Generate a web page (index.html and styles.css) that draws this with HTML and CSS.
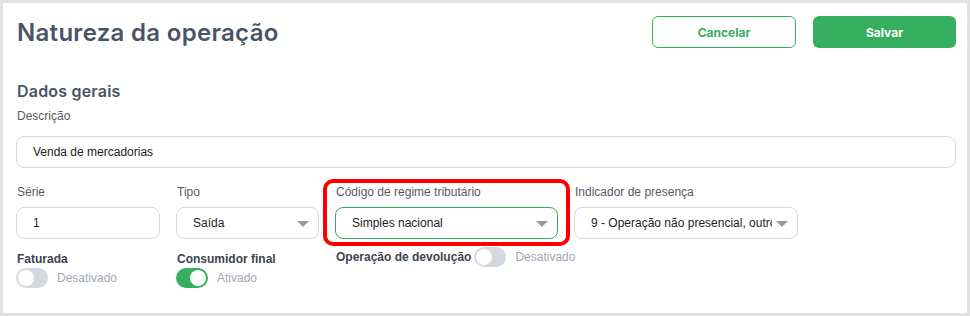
FILE: index.html
```html
<!DOCTYPE html>
<html lang="pt-BR">
<head>
    <meta charset="UTF-8">
    <meta name="viewport" content="width=device-width, initial-scale=1.0">
    <title>Natureza da operação</title>
    <link rel="stylesheet" href="styles.css">
</head>
<body>
    <div class="frame">
        <header class="page-header">
            <h1>Natureza da operação</h1>
            <div class="actions">
                <button class="btn btn-outline">Cancelar</button>
                <button class="btn btn-primary">Salvar</button>
            </div>
        </header>

        <section class="section">
            <h2>Dados gerais</h2>
            <label class="label">Descrição</label>
            <div class="input">Venda de mercadorias</div>

            <div class="grid">
                <div class="field">
                    <label class="label">Série</label>
                    <div class="input">1</div>
                </div>
                <div class="field">
                    <label class="label">Tipo</label>
                    <div class="input select">Saída</div>
                </div>
                <div class="field highlighted">
                    <label class="label">Código de regime tributário</label>
                    <div class="input select focus">Simples nacional</div>
                    <span class="highlight"></span>
                </div>
                <div class="field">
                    <label class="label">Indicador de presença</label>
                    <div class="input select"><span class="clip">9 - Operação não presencial, outros</span></div>
                </div>

                <div class="switch-field">
                    <span class="switch-title">Faturada</span>
                    <div class="switch-line">
                        <span class="switch"></span>
                        <span class="switch-text">Desativado</span>
                    </div>
                </div>
                <div class="switch-field">
                    <span class="switch-title">Consumidor final</span>
                    <div class="switch-line">
                        <span class="switch on"></span>
                        <span class="switch-text">Ativado</span>
                    </div>
                </div>
                <div class="switch-field inline">
                    <span class="switch-title">Operação de devolução</span>
                    <span class="switch"></span>
                    <span class="switch-text">Desativado</span>
                </div>
            </div>
        </section>
    </div>
</body>
</html>
```

FILE: styles.css
```css
body {
    margin: 0;
    padding: 0;
    background-color: #fff;
    font-family: "Liberation Sans", Arial, sans-serif;
}

.frame {
    width: 970px;
    height: 316px;
    box-sizing: border-box;
    border: 3px solid #e2e2e2;
    padding: 13px 11px 0 13px;
    background-color: #fff;
}

.page-header {
    display: flex;
    align-items: center;
    justify-content: space-between;
}

h1 {
    margin: 0 0 0 1px;
    font-family: "Inter", sans-serif;
    font-weight: 600;
    font-size: 24px;
    color: #485467;
    letter-spacing: 0.3px;
}

.actions {
    display: flex;
    gap: 17px;
}

.btn {
    width: 144px;
    height: 32px;
    border-radius: 6px;
    font-family: "Inter", sans-serif;
    font-weight: 700;
    font-size: 12px;
    cursor: pointer;
}

.btn-outline {
    background-color: #fff;
    border: 1px solid #36ae60;
    color: #36ae60;
}

.btn-primary {
    width: 143px;
    background-color: #36ae60;
    border: none;
    color: #fff;
}

.section {
    margin-top: 33px;
}

h2 {
    margin: 0 0 0 1px;
    font-family: "Inter", sans-serif;
    font-weight: 600;
    font-size: 16px;
    color: #485467;
    letter-spacing: 0.2px;
}

.label {
    display: block;
    margin: 8px 0 0 1px;
    font-size: 12px;
    color: #555b66;
}

.input {
    box-sizing: border-box;
    height: 32px;
    margin-top: 13px;
    padding: 0 16px;
    border: 1px solid #d6dae1;
    border-radius: 8px;
    display: flex;
    align-items: center;
    font-size: 12px;
    color: #222;
    background-color: #fff;
}

.grid {
    display: grid;
    grid-template-columns: 144px 143px 223px 224px;
    column-gap: 16px;
    margin-top: 17px;
}

.field {
    position: relative;
}

.field .label {
    margin-top: 0;
}

.field .input {
    margin-top: 8px;
}

.select {
    position: relative;
    padding-right: 25px;
}

.select::after {
    content: "";
    position: absolute;
    right: 9px;
    top: 13px;
    border-left: 6px solid transparent;
    border-right: 6px solid transparent;
    border-top: 6px solid #9a9a9a;
}

.clip {
    white-space: nowrap;
    overflow: hidden;
}

.focus {
    border-color: #36ae60;
}

.highlight {
    position: absolute;
    left: -12px;
    top: -6px;
    right: -12px;
    bottom: -7px;
    border: 4px solid #f00;
    border-radius: 10px;
    pointer-events: none;
}

.switch-field {
    margin-top: 13px;
}

.switch-title {
    display: block;
    margin-left: 1px;
    font-size: 12px;
    font-weight: 700;
    color: #3d4350;
    white-space: nowrap;
}

.switch-line {
    display: flex;
    align-items: center;
    margin-top: 2px;
}

.switch {
    position: relative;
    display: inline-block;
    width: 32px;
    height: 20px;
    border-radius: 10px;
    background-color: #d3d8e1;
    flex-shrink: 0;
}

.switch::after {
    content: "";
    position: absolute;
    left: 2px;
    top: 2px;
    width: 16px;
    height: 16px;
    border-radius: 50%;
    background-color: #fff;
}

.switch.on {
    background-color: #36ae60;
}

.switch.on::after {
    left: 14px;
}

.switch-text {
    margin-left: 9px;
    font-size: 12px;
    color: #a1a8b5;
    white-space: nowrap;
}

.switch-field.inline {
    display: flex;
    align-items: center;
    margin-top: 8px;
    align-self: start;
}

.switch-field.inline .switch {
    margin-left: 3px;
}
```
